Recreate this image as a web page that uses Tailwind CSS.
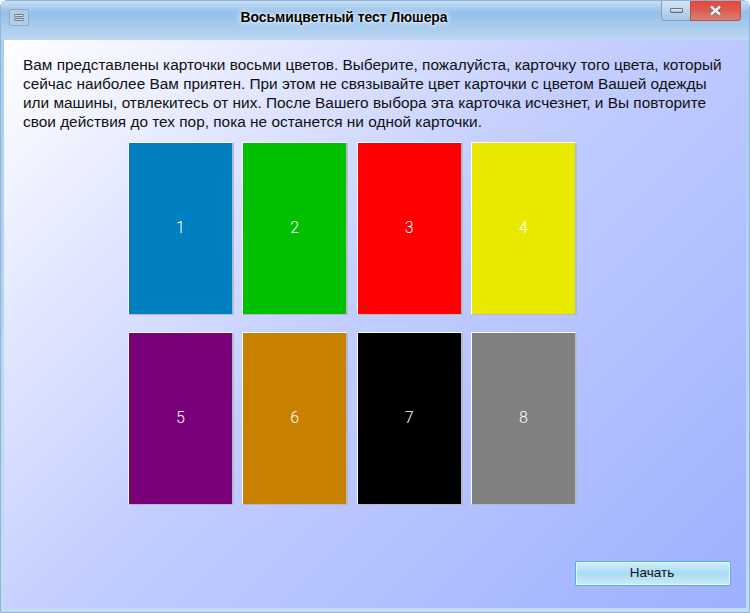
<!DOCTYPE html>
<html lang="ru">
  <head>
    <meta charset="UTF-8" />
    <title>Восьмицветный тест Люшера</title>
    <script src="https://cdn.jsdelivr.net/npm/@tailwindcss/browser@4"></script>
  </head>
  <body class="overflow-hidden">
    <div class="w-[750px] h-[613px] flex flex-col bg-gradient-to-b from-[#a9cdf0] to-[#c4dcf3] rounded-t-[7px] font-['Liberation_Sans',sans-serif] border border-[#8fb4d8]">
      <!-- title bar -->
      <div class="h-[39px] shrink-0 relative flex items-start justify-center pr-[62px] bg-gradient-to-b from-[#c9e0f5] via-[#94c0ea] via-30% to-[#bcd7f1]">
        <div class="absolute left-[8px] top-[8px] w-[20px] h-[17px] rounded-[2px] border border-[#8fa9c6] bg-[#b4cbe4] flex flex-col items-center justify-center gap-[1px]">
          <div class="w-[10px] h-[3px] rounded-[1px] border border-[#6f7f92] bg-[#d5dfea]"></div>
          <div class="w-[10px] h-[3px] rounded-[1px] border border-[#6f7f92] bg-[#d5dfea]"></div>
        </div>
        <span class="mt-[8px] text-[13.9px] leading-[17px] font-bold text-black [text-shadow:0_0_6px_white,0_0_3px_white]">Восьмицветный тест Люшера</span>
        <div class="absolute right-[8px] top-0 flex h-[20px]">
          <div class="w-[29px] flex items-center justify-center rounded-bl-[4px] border border-t-0 border-r-0 border-[#7f9fc0] bg-gradient-to-b from-[#d3e4f5] to-[#a9c6e4]">
            <div class="w-[13px] h-[5px] rounded-[1px] border border-[#5f6f85] bg-gradient-to-b from-[#f0f3f7] to-[#a9b5c6]"></div>
          </div>
          <div class="w-[51px] flex items-center justify-center rounded-br-[4px] border border-t-0 border-[#b5524c] bg-gradient-to-b from-[#e8463a] via-[#dc5c50] to-[#d98078]">
            <svg width="13" height="11" viewBox="0 0 13 11"><path d="M2 1.5 L11 9.5 M11 1.5 L2 9.5" stroke="#6b6b70" stroke-width="4"/><path d="M2 1.5 L11 9.5 M11 1.5 L2 9.5" stroke="#f1f1f3" stroke-width="2.4"/></svg>
          </div>
        </div>
      </div>
      <!-- client area -->
      <div class="flex-1 mx-[3px] mb-[4px] flex flex-col bg-[linear-gradient(135deg,#ffffff_0%,#c2cdff_48%,#9db0ff_100%)]">
        <p class="ml-[19px] mt-[15px] w-[704px] text-[15.4px] leading-[19px] text-[#111]">Вам представлены карточки восьми цветов. Выберите, пожалуйста, карточку того цвета, который сейчас наиболее Вам приятен. При этом не связывайте цвет карточки с цветом Вашей одежды или машины, отвлекитесь от них. После Вашего выбора эта карточка исчезнет, и Вы повторите свои действия до тех пор, пока не останется ни одной карточки.</p>
        <div class="ml-[124px] mt-[11px] grid grid-cols-[repeat(4,106px)] gap-x-[8.3px] gap-y-[17px]">
          <div class="h-[173px] pb-px flex items-center justify-center text-white text-[16px] font-['Roboto',sans-serif] font-light border border-white border-r-2 border-r-[#b4b9cc] border-b-[#b4b9cc] bg-[#0080c0]">1</div>
          <div class="h-[173px] pb-px flex items-center justify-center text-white text-[16px] font-['Roboto',sans-serif] font-light border border-white border-r-2 border-r-[#b4b9cc] border-b-[#b4b9cc] bg-[#00c000]">2</div>
          <div class="h-[173px] pb-px flex items-center justify-center text-white text-[16px] font-['Roboto',sans-serif] font-light border border-white border-r-2 border-r-[#b4b9cc] border-b-[#b4b9cc] bg-[#ff0000]">3</div>
          <div class="h-[173px] pb-px flex items-center justify-center text-white text-[16px] font-['Roboto',sans-serif] font-light border border-white border-r-2 border-r-[#b4b9cc] border-b-[#b4b9cc] bg-[#e9e900]">4</div>
          <div class="h-[173px] pb-px flex items-center justify-center text-white text-[16px] font-['Roboto',sans-serif] font-light border border-white border-r-2 border-r-[#b4b9cc] border-b-[#b4b9cc] bg-[#780078]">5</div>
          <div class="h-[173px] pb-px flex items-center justify-center text-white text-[16px] font-['Roboto',sans-serif] font-light border border-white border-r-2 border-r-[#b4b9cc] border-b-[#b4b9cc] bg-[#c88000]">6</div>
          <div class="h-[173px] pb-px flex items-center justify-center text-white text-[16px] font-['Roboto',sans-serif] font-light border border-white border-r-2 border-r-[#b4b9cc] border-b-[#b4b9cc] bg-[#000000]">7</div>
          <div class="h-[173px] pb-px flex items-center justify-center text-white text-[16px] font-['Roboto',sans-serif] font-light border border-white border-r-2 border-r-[#b4b9cc] border-b-[#b4b9cc] bg-[#808080]">8</div>
        </div>
        <div class="mt-auto mb-[22px] mr-[15px] flex justify-end">
          <button class="w-[156px] h-[25px] text-[13.5px] text-[#111] pr-[2px] rounded-[2px] border border-[#4fb3d9] bg-gradient-to-b from-[#d3effc] via-[#a7dcf3] to-[#cdebfa] shadow-[inset_0_0_0_1px_#e6f7fe]">Начать</button>
        </div>
      </div>
    </div>
  </body>
</html>
